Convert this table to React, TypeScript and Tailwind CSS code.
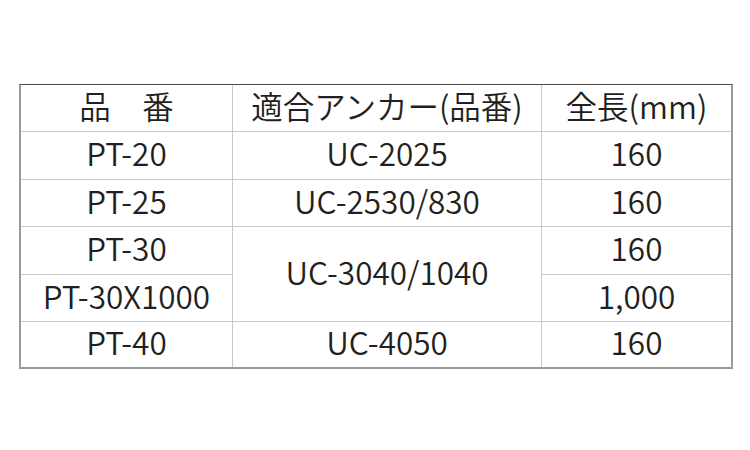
import React from "react";

const font = { fontFamily: '"Noto Sans CJK JP", "Noto Sans", sans-serif' };

export default function App() {
  const cell = "flex items-center justify-center pb-[5px] border-[#c8c8c8] text-[31.5px] font-[350] leading-none text-[#231f20]";
  return (
    <div className="w-[750px] h-[450px] bg-white pt-[84px] pl-[19px]" style={font}>
      <div className="w-[714px] border-t border-t-[#4a4a4a] border-l-2 border-r-2 border-b-2 border-l-[#9a9a9a] border-r-[#9a9a9a] border-b-[#9a9a9a] grid grid-cols-[212px_309px_189px] grid-rows-[47px_48px_47px_48px_47px_45px]">
        <div className={`${cell} border-r border-b`}>品　番</div>
        <div className={`${cell} border-r border-b`}>適合アンカー(品番)</div>
        <div className={`${cell} border-b`}>全長(mm)</div>

        <div className={`${cell} border-r border-b`}>PT-20</div>
        <div className={`${cell} border-r border-b`}>UC-2025</div>
        <div className={`${cell} border-b`}>160</div>

        <div className={`${cell} border-r border-b`}>PT-25</div>
        <div className={`${cell} border-r border-b`}>UC-2530/830</div>
        <div className={`${cell} border-b`}>160</div>

        <div className={`${cell} border-r border-b`}>PT-30</div>
        <div className={`${cell} border-r border-b row-span-2`}>UC-3040/1040</div>
        <div className={`${cell} border-b`}>160</div>

        <div className={`${cell} border-r border-b`}>PT-30X1000</div>
        <div className={`${cell} border-b`}>1,000</div>

        <div className={`${cell} border-r`}>PT-40</div>
        <div className={`${cell} border-r`}>UC-4050</div>
        <div className={`${cell}`}>160</div>
      </div>
    </div>
  );
}
